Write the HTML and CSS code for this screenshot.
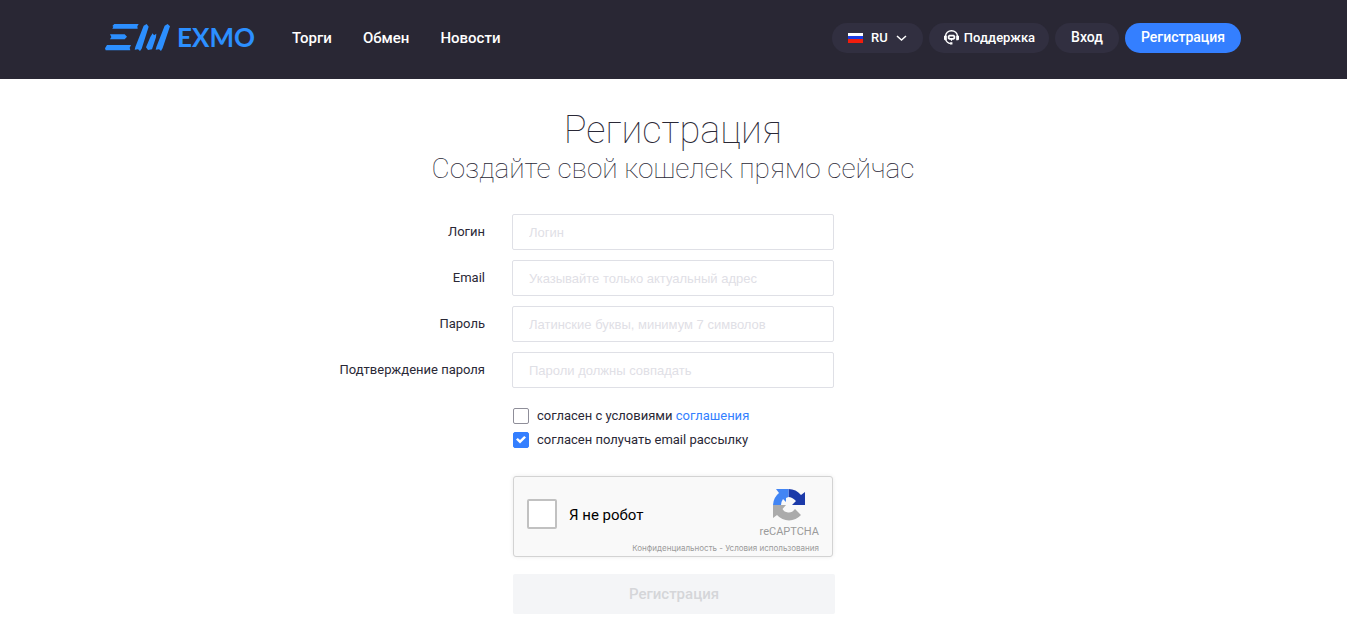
FILE: index.html
```html
<!DOCTYPE html>
<html lang="ru">
<head>
<meta charset="utf-8">
<meta name="viewport" content="width=device-width, initial-scale=1">
<title>EXMO — Регистрация</title>
<link rel="stylesheet" href="styles.css">
</head>
<body>
<header class="header">
  <div class="header-inner">
    <a class="logo" href="#">
      <svg class="logo-mark" viewBox="0 0 195 81" aria-hidden="true">
        <path d="M28 0H101L97 7L98 14H22L25 8L22 6ZM15 31H59L66 38L59 46H15L19 39ZM6 63H78L74 71L76 79H2L0 73ZM116 5L125 0L131 8L110 74L105 81L99 76L89 77L91 69ZM136 39L143 28L147 34L154 29L153 40L141 76L129 78L123 70ZM179 5L188 0L195 7L173 72L168 81L162 76L152 77L154 69Z"/>
      </svg>
      <span class="logo-text">EXMO</span>
    </a>
    <nav class="nav">
      <a href="#">Торги</a>
      <a href="#">Обмен</a>
      <a href="#">Новости</a>
    </nav>
    <div class="actions">
      <button class="pill pill-lang" type="button">
        <span class="flag"></span>
        <span>RU</span>
        <svg class="chevron" viewBox="0 0 11 8" aria-hidden="true"><path d="M1 2L5.500 6L10 2"/></svg>
      </button>
      <a class="pill pill-support" href="#">
        <svg class="support-icon" viewBox="0 0 16 16" aria-hidden="true">
          <path class="line" d="M1.700 7V6.500A6.300 5.700 0 0 1 14.300 6.500V7M1.700 10Q3 14 7 14.500"/>
          <path class="fill" d="M0 6H3V11H1L0 10ZM13 6H16V10L15 11H13ZM6.500 13H9V15.500H6.500Z"/>
          <path class="fill" fill-rule="evenodd" d="M5.500 5H10.500L12 6.500V9L10.500 10.500H9L8 12L7 10.500H5.500L4 9V6.500ZM6 7V8.500H10V7Z"/>
        </svg>
        <span>Поддержка</span>
      </a>
      <a class="pill pill-text" href="#">Вход</a>
      <a class="pill pill-text pill-primary" href="#">Регистрация</a>
    </div>
  </div>
</header>
<main class="main">
  <h1 class="title">Регистрация</h1>
  <h2 class="subtitle">Создайте свой кошелек прямо сейчас</h2>
  <form class="form">
    <div class="row">
      <label for="login">Логин</label>
      <input class="field" id="login" type="text" placeholder="Логин">
    </div>
    <div class="row">
      <label for="email">Email</label>
      <input class="field" id="email" type="email" placeholder="Указывайте только актуальный адрес">
    </div>
    <div class="row">
      <label for="password">Пароль</label>
      <input class="field" id="password" type="password" placeholder="Латинские буквы, минимум 7 символов">
    </div>
    <div class="row">
      <label for="confirm">Подтверждение пароля</label>
      <input class="field" id="confirm" type="password" placeholder="Пароли должны совпадать">
    </div>
    <div class="lower">
      <div class="checks">
        <div class="check">
          <input class="box" id="terms" type="checkbox">
          <label for="terms">согласен с условиями <a href="#">соглашения</a></label>
        </div>
        <div class="check">
          <input class="box" id="news" type="checkbox" checked>
          <label for="news">согласен получать email рассылку</label>
        </div>
      </div>
      <div class="captcha">
        <div class="captcha-check">
          <input class="captcha-box" id="robot" type="checkbox">
          <label for="robot">Я не робот</label>
        </div>
        <div class="captcha-brand">
          <svg class="captcha-logo" viewBox="0 0 32 32" aria-hidden="true">
            <path class="navy" d="M15.500 0A16 16 0 0 1 28 6L32 3V16H19L23 12Q19 8 15.500 8Z"/>
            <path class="blue" d="M15.500 0H3L6 4A16 16 0 0 0 0 16H8Q8 13 10 10L13 13V9L15.500 8Z"/>
            <path class="gray" d="M0 16V29L4 26A16 16 0 0 0 28 26L22 20Q19 24 15 23.500Q11 23 9.500 20L13 16Z"/>
          </svg>
          <span class="captcha-name">reCAPTCHA</span>
          <span class="captcha-links"><a href="#">Конфиденциальность</a> - <a href="#">Условия использования</a></span>
        </div>
      </div>
      <button class="submit" type="submit" disabled>Регистрация</button>
    </div>
  </form>
</main>
</body>
</html>
```
FILE: styles.css
```css
* {
  box-sizing: border-box;
}

body {
  margin: 0;
  background: #fff;
  color: #2a2836;
  font-family: Roboto, "Open Sans", sans-serif;
  font-size: 13px;
}

a {
  color: #347fff;
  text-decoration: none;
}

.header {
  background: #292734;
  padding: 22px 25px 26px 24px;
}

.header-inner {
  display: flex;
  align-items: center;
  max-width: 1136px;
  margin: 0 auto;
}

.logo {
  display: flex;
  align-items: center;
  gap: 7px;
  color: #2c8fff;
}

.logo-mark {
  width: 65px;
  height: 27px;
  margin-bottom: 1px;
  fill: #2c8fff;
}

.logo-text {
  padding-bottom: 1px;
  font-family: Lato, sans-serif;
  font-size: 26px;
  font-weight: 700;
  line-height: 30px;
}

.nav {
  display: flex;
  gap: 31px;
  margin-left: 37px;
}

.nav a {
  color: #fff;
  font-size: 15px;
  font-weight: 500;
}

.actions {
  display: flex;
  gap: 6px;
  margin-left: auto;
}

.pill {
  display: flex;
  align-items: center;
  height: 30px;
  padding: 0 16px;
  border: 0;
  border-radius: 15px;
  background: #312f40;
  color: #fff;
  font-family: inherit;
  font-size: 13px;
  font-weight: 500;
}

.pill-lang {
  gap: 8px;
}

.pill-support {
  gap: 5px;
  padding: 0 14px 0 15px;
}

.pill-text {
  padding-bottom: 2px;
  font-size: 14px;
}

.pill-primary {
  background: #347fff;
}

.flag {
  width: 15px;
  height: 10px;
  background: linear-gradient(#fff 30%, #1a3be0 30% 65%, #f21d0d 65%);
}

.chevron {
  width: 11px;
  height: 8px;
  fill: none;
  stroke: #fff;
  stroke-width: 1.5;
}

.support-icon {
  width: 15px;
  height: 15px;
}

.support-icon .line {
  fill: none;
  stroke: #fff;
  stroke-width: 1.5;
}

.support-icon .fill {
  fill: #fff;
}

.main {
  padding: 29px 25px 16px 24px;
}

.title,
.subtitle {
  margin: 0;
  text-align: center;
  font-weight: 100;
}

.title {
  font-size: 38px;
  line-height: 44px;
}

.subtitle {
  font-size: 28px;
  line-height: 34px;
}

.form {
  display: flex;
  flex-direction: column;
  gap: 10px;
  margin-top: 28px;
}

.row,
.lower {
  display: grid;
  grid-template-columns: minmax(0, 1fr) 322px minmax(0, 1fr);
  column-gap: 27px;
}

.row {
  align-items: center;
}

.row label {
  padding-bottom: 2px;
  text-align: right;
}

.field {
  width: 100%;
  height: 36px;
  padding: 0 16px;
  border: 1px solid #dfe0e6;
  border-radius: 2px;
  background: #fff;
  color: #2a2836;
  font-family: "Liberation Sans", Arial, sans-serif;
  font-size: 13px;
}

.field::placeholder {
  color: #dfe0e6;
}

.lower {
  padding-left: 2px;
}

.lower > * {
  grid-column: 2;
}

.checks {
  display: flex;
  flex-direction: column;
  gap: 8px;
  margin-top: 10px;
}

.check {
  display: flex;
  align-items: center;
  gap: 8px;
  height: 16px;
}

.check label {
  padding-bottom: 2px;
}

.box,
.captcha-box {
  appearance: none;
  margin: 0;
  background: #fff;
}

.box {
  width: 16px;
  height: 16px;
  border: 1px solid #8f8e99;
  border-radius: 2px;
}

.box:checked {
  border-color: #347fff;
  background: #347fff;
}

.box:checked::before {
  content: "";
  display: block;
  width: 10px;
  height: 8px;
  margin: 3px 0 0 2px;
  background: #fff;
  clip-path: polygon(0 45%, 18% 25%, 40% 50%, 82% 0, 100% 20%, 40% 95%);
}

.captcha {
  display: flex;
  justify-content: space-between;
  height: 81px;
  margin: 28px 2px 0 0;
  padding: 0 13px;
  border: 1px solid #d3d3d3;
  border-radius: 3px;
  background: #f9f9f9;
  box-shadow: 0 0 4px rgba(0, 0, 0, 0.08);
}

.captcha-check {
  display: flex;
  align-items: center;
  gap: 12px;
  height: 74px;
  color: #000;
  font-size: 15px;
  white-space: nowrap;
}

.captcha-check label {
  padding-top: 2px;
}

.captcha-box {
  width: 30px;
  height: 30px;
  border: 2px solid #c1c1c1;
  border-radius: 2px;
}

.captcha-brand {
  display: flex;
  flex: 1;
  flex-direction: column;
  align-items: flex-end;
  min-width: 0;
  padding-top: 12px;
  color: #9b9b9b;
}

.captcha-logo {
  width: 32px;
  height: 32px;
  margin-right: 14px;
}

.captcha-logo .navy {
  fill: #1c3aa9;
}

.captcha-logo .blue {
  fill: #4285f4;
}

.captcha-logo .gray {
  fill: #ababab;
}

.captcha-name {
  margin-top: 4px;
  font-size: 11px;
  line-height: 13px;
}

.captcha-links {
  margin-top: 5px;
  font-family: Inter, Roboto, sans-serif;
  font-size: 8px;
  line-height: 10px;
  white-space: nowrap;
}

.captcha-links a {
  color: inherit;
}

.submit {
  height: 40px;
  margin-top: 17px;
  border: 0;
  border-radius: 2px;
  background: #f4f5f7;
  color: #d5d6d9;
  font-family: inherit;
  font-size: 15px;
  font-weight: 500;
}
```
